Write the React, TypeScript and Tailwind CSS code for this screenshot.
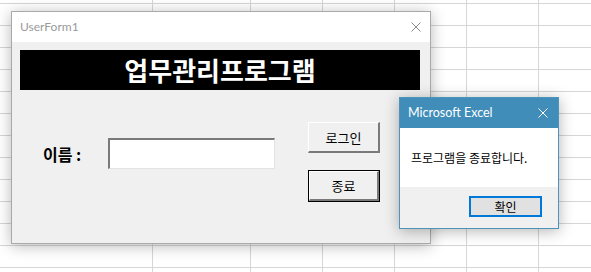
import React from "react";

const kr = { fontFamily: '"Noto Sans CJK KR", "Noto Sans", sans-serif' };
const ui = { fontFamily: 'Lato, "Open Sans", sans-serif' };

function XIcon({ color, size = 10 }: { color: string; size?: number }) {
  return (
    <svg width={size} height={size} viewBox="0 0 10 10" className="block">
      <path d="M0.5 0.5 L9.5 9.5 M9.5 0.5 L0.5 9.5" stroke={color} strokeWidth="1" fill="none" />
    </svg>
  );
}

export default function App() {
  const cols = [153, 98, 72, 72, 72, 72];
  return (
    <div className="relative w-[591px] h-[272px] overflow-hidden bg-white bg-[linear-gradient(#d6d6d6_1px,transparent_1px)] bg-[size:100%_22px] bg-[position:0_3px]">
      {/* spreadsheet columns */}
      <div className="flex h-full">
        {cols.map((w, i) => (
          <div key={i} className="h-full shrink-0 border-r border-[#d6d6d6]" style={{ width: w }} />
        ))}
        <div className="flex-1" />
      </div>

      {/* UserForm window */}
      <div className="absolute left-[11px] top-[11px] w-[420px] h-[233px] border border-[#a9a9a9] bg-[#f0f0f0] shadow-[0_2px_14px_rgba(0,0,0,0.28)] flex flex-col">
        <div className="h-[30px] bg-white flex items-center justify-between pl-[8px] pr-[9px]">
          <span className="text-[12px] text-[#9a9a9a] leading-none" style={ui}>UserForm1</span>
          <XIcon color="#8a8a8a" />
        </div>
        <div className="flex-1 flex flex-col pt-[8px] pl-[8px]">
          <div className="w-[400px] h-[40px] bg-black flex items-center justify-center">
            <span className="text-white text-[26px] font-bold leading-none" style={kr}>업무관리프로그램</span>
          </div>
          <div className="flex items-start">
            <div className="flex items-center mt-[48px]">
              <div className="w-[88px] pl-[23px] text-[16px] font-bold text-black leading-none" style={kr}>이름 :</div>
              <div className="w-[167px] h-[31px] bg-white border-t-2 border-l-2 border-b border-r border-t-[#7a7a7a] border-l-[#7a7a7a] border-b-[#e3e3e3] border-r-[#e3e3e3]" />
            </div>
            <div className="flex flex-col gap-[17px] mt-[32px] ml-[33px]">
              <div className="w-[72px] h-[31px] bg-[#f0f0f0] border-t border-l border-t-white border-l-white border-b-2 border-r-2 border-b-[#7a7a7a] border-r-[#7a7a7a] flex items-center justify-center">
                <span className="text-[13px] text-black leading-none" style={kr}>로그인</span>
              </div>
              <div className="w-[72px] h-[32px] border border-black">
                <div className="w-full h-full bg-[#f0f0f0] border-t border-l border-t-white border-l-white border-b-2 border-r-2 border-b-[#7a7a7a] border-r-[#7a7a7a] flex items-center justify-center">
                  <span className="text-[13px] text-black leading-none" style={kr}>종료</span>
                </div>
              </div>
            </div>
          </div>
        </div>
      </div>

      {/* Message box */}
      <div className="absolute left-[399px] top-[97px] w-[160px] h-[132px] border border-[#4d94bd] bg-[#f0f0f0] shadow-[0_2px_14px_rgba(0,0,0,0.3)] flex flex-col">
        <div className="h-[30px] bg-[#3f8db8] flex items-center justify-between pl-[8px] pr-[10px]">
          <span className="text-[12.5px] text-white leading-none" style={ui}>Microsoft Excel</span>
          <XIcon color="#ffffff" />
        </div>
        <div className="h-[59px] bg-white flex items-center pl-[11px]">
          <span className="text-[12px] text-black leading-none" style={kr}>프로그램을 종료합니다.</span>
        </div>
        <div className="flex-1 flex items-start justify-end pt-[9px] pr-[16px]">
          <div className="w-[73px] h-[21px] bg-[#e1e1e1] border-2 border-[#0078d7] flex items-center justify-center">
            <span className="text-[12px] text-black leading-none" style={kr}>확인</span>
          </div>
        </div>
      </div>
    </div>
  );
}
